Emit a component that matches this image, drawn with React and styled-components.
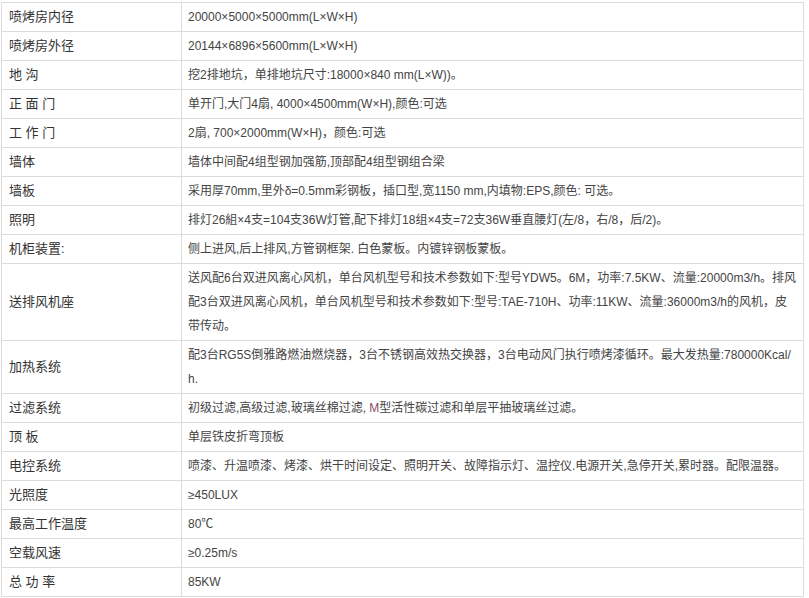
import React from "react";
import styled, { createGlobalStyle } from "styled-components";

const GlobalStyle = createGlobalStyle`
  html, body {
    margin: 0;
    padding: 0;
    background: #fff;
  }
`;

const Wrapper = styled.div`
  padding: 2px 0 0 1px;
`;

const SpecTable = styled.table`
  width: 803px;
  border-collapse: collapse;
  table-layout: fixed;
  font-family: "Liberation Sans", "Noto Sans CJK SC", Arial, sans-serif;
  color: #3a3a3a;
`;

const LabelCell = styled.td`
  width: 172px;
  padding: 2px 0 2px 7px;
  border: 1px solid #dcdcdc;
  font-size: 13px;
  line-height: 24px;
  color: #333;
  vertical-align: middle;
`;

const ValueCell = styled.td`
  padding: 2px 6px 2px 6px;
  border: 1px solid #dcdcdc;
  font-size: 12px;
  line-height: 24px;
  color: #444;
  word-break: break-all;
`;

const Accent = styled.span`
  color: #8a4a6a;
`;

const rows = [
  ["喷烤房内径", "20000×5000×5000mm(L×W×H)"],
  ["喷烤房外径", "20144×6896×5600mm(L×W×H)"],
  ["地 沟", "挖2排地坑，单排地坑尺寸:18000×840 mm(L×W))。"],
  ["正 面 门", "单开门,大门4扇, 4000×4500mm(W×H),颜色:可选"],
  ["工 作 门", "2扇, 700×2000mm(W×H)，颜色:可选"],
  ["墙体", "墙体中间配4组型钢加强筋,顶部配4组型钢组合梁"],
  ["墙板", "采用厚70mm,里外δ=0.5mm彩钢板，插口型,宽1150 mm,内填物:EPS,颜色: 可选。"],
  ["照明", "排灯26組×4支=104支36W灯管,配下排灯18组×4支=72支36W垂直腰灯(左/8，右/8，后/2)。"],
  ["机柜装置:", "侧上进风,后上排风,方管钢框架. 白色蒙板。内镀锌钢板蒙板。"],
  [
    "送排风机座",
    "送风配6台双进风离心风机，单台风机型号和技术参数如下:型号YDW5。6M，功率:7.5KW、流量:20000m3/h。排风配3台双进风离心风机，单台风机型号和技术参数如下:型号:TAE-710H、功率:11KW、流量:36000m3/h的风机，皮带传动。",
  ],
  [
    "加热系统",
    "配3台RG5S倒雅路燃油燃烧器，3台不锈钢高效热交换器，3台电动风门执行喷烤漆循环。最大发热量:780000Kcal/h.",
  ],
  [
    "过滤系统",
    <>
      初级过滤,高级过滤,玻璃丝棉过滤, <Accent>M</Accent>型活性碳过滤和单层平抽玻璃丝过滤。
    </>,
  ],
  ["顶 板", "单层铁皮折弯顶板"],
  ["电控系统", "喷漆、升温喷漆、烤漆、烘干时间设定、照明开关、故障指示灯、温控仪.电源开关,急停开关,累时器。配限温器。"],
  ["光照度", "≥450LUX"],
  ["最高工作温度", "80℃"],
  ["空载风速", "≥0.25m/s"],
  ["总 功 率", "85KW"],
];

export default function App() {
  return (
    <Wrapper>
      <GlobalStyle />
      <SpecTable>
        <tbody>
          {rows.map(([label, value], i) => (
            <tr key={i}>
              <LabelCell>{label}</LabelCell>
              <ValueCell>{value}</ValueCell>
            </tr>
          ))}
        </tbody>
      </SpecTable>
    </Wrapper>
  );
}
